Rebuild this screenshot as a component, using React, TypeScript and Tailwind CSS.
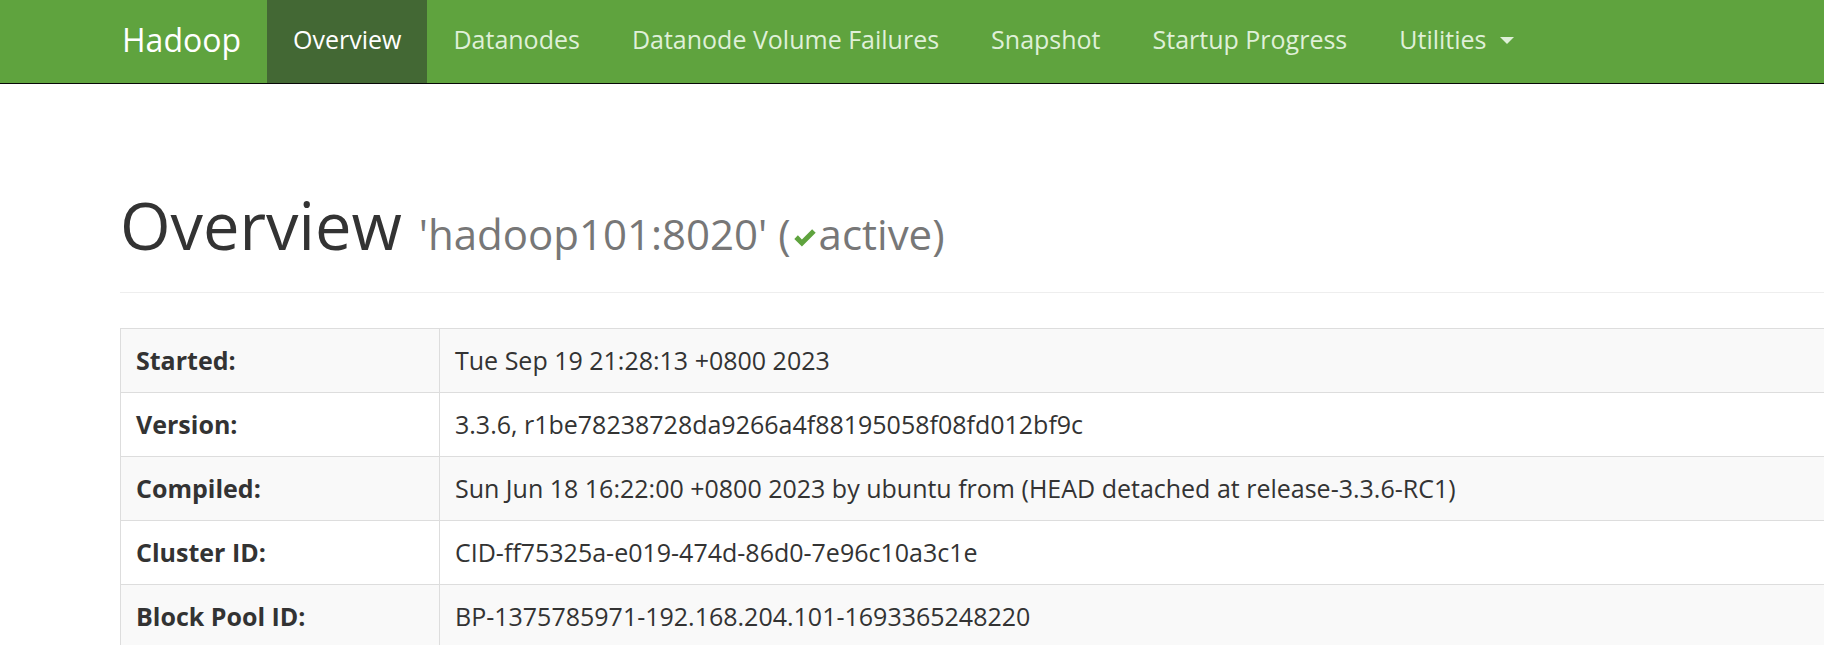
import React from "react";

const navItems = [
  "Overview",
  "Datanodes",
  "Datanode Volume Failures",
  "Snapshot",
  "Startup Progress",
];

const rows = [
  { label: "Started:", value: "Tue Sep 19 21:28:13 +0800 2023" },
  { label: "Version:", value: "3.3.6, r1be78238728da9266a4f88195058f08fd012bf9c" },
  {
    label: "Compiled:",
    value: "Sun Jun 18 16:22:00 +0800 2023 by ubuntu from (HEAD detached at release-3.3.6-RC1)",
  },
  { label: "Cluster ID:", value: "CID-ff75325a-e019-474d-86d0-7e96c10a3c1e" },
  { label: "Block Pool ID:", value: "BP-1375785971-192.168.204.101-1693365248220" },
  { label: "", value: "" },
];

function Check() {
  return (
    <svg viewBox="0 0 20 16" className="w-[24px] h-[19px] inline-block mx-[2px] mb-[3px]">
      <path d="M1 9.2 L4 6.2 L7.4 9.6 L16 1 L19 4 L7.4 15.6 Z" fill="#5fa33e" />
    </svg>
  );
}

export default function App() {
  return (
    <div className="w-[1824px] h-[645px] overflow-hidden bg-white text-[#333] font-['Open_Sans',sans-serif]">
      <nav className="h-[84px] bg-[#5fa33e] border-b border-[#080808] flex items-stretch pl-[122px]">
        <div className="flex items-center pb-[3px] pr-[26px] text-[32px] text-white">Hadoop</div>
        {navItems.map((item, i) => (
          <div
            key={item}
            className={
              i === 0
                ? "flex items-center pb-[3px] px-[26px] text-[25px] text-white bg-[#436834]"
                : "flex items-center pb-[3px] px-[26px] text-[25px] text-[#dff0d8]"
            }
          >
            {item}
          </div>
        ))}
        <div className="flex items-center pb-[3px] px-[26px] text-[25px] text-[#dff0d8]">
          Utilities
          <span className="ml-[13px] w-0 h-0 border-l-[7px] border-r-[7px] border-t-[7px] border-l-transparent border-r-transparent border-t-[#dff0d8]" />
        </div>
      </nav>

      <div className="pl-[120px]">
        <div className="mt-[103px] pb-[20px] border-b border-[#eee] w-[1800px]">
          <h1 className="text-[65px] leading-[76px] font-normal">
            Overview{" "}
            <span className="text-[42px] text-[#777]">
              'hadoop101:8020' (<Check />active)
            </span>
          </h1>
        </div>

        <div className="mt-[35px] w-[1800px] border-l border-[#ddd]">
          {rows.map((r, i) => (
            <div
              key={i}
              className={
                i % 2 === 0
                  ? "flex h-[64px] border-t border-[#ddd] bg-[#f9f9f9]"
                  : "flex h-[64px] border-t border-[#ddd] bg-white"
              }
            >
              <div className="w-[319px] shrink-0 flex items-center px-[15px] border-r border-[#ddd] font-bold text-[25px]">
                {r.label}
              </div>
              <div className="flex-1 flex items-center px-[15px] text-[25px]">{r.value}</div>
            </div>
          ))}
        </div>
      </div>
    </div>
  );
}
